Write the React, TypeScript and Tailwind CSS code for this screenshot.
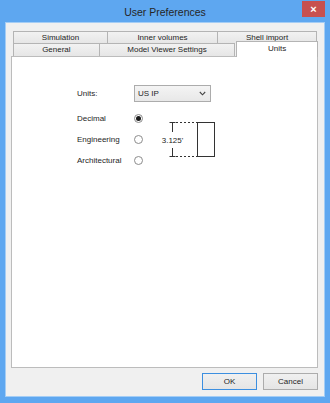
import React from "react";

function Tab({ label, className }: { label: string; className: string }) {
  return (
    <div
      className={`flex items-center justify-center border-l border-t border-r border-[#b4b4b4] bg-gradient-to-b from-[#f2f2f2] to-[#e6e6e6] text-[#1e1e1e] ${className}`}
    >
      {label}
    </div>
  );
}

function Radio({ checked }: { checked?: boolean }) {
  return (
    <div className="w-[9px] h-[9px] rounded-full border border-[#8c8c8c] bg-white flex items-center justify-center">
      {checked && <div className="w-[5px] h-[5px] rounded-full bg-[#1a1a1a]" />}
    </div>
  );
}

export default function App() {
  return (
    <div className="w-[330px] h-[403px] bg-[#5ea7f0] flex flex-col font-['Liberation_Sans',Arial,sans-serif] text-[8px] text-[#1e1e1e] leading-none">
      {/* Title bar */}
      <div className="relative h-[22px] flex items-center justify-center pt-[2px] text-[10.5px] text-[#262626]">
        User Preferences
        <div className="absolute right-[5px] top-[1px] w-[23px] h-[16px] bg-[#c75050] flex items-center justify-center text-white text-[11px] font-bold">
          ×
        </div>
      </div>

      {/* Client area */}
      <div className="mx-[5px] h-[375px] border border-[#a4cdf5] bg-[#f0f0f0] flex flex-col pt-[8px] pl-[5px] pr-[6px]">
        {/* Tab row 1 */}
        <div className="flex h-[12px] ml-[2px]">
          <Tab label="Simulation" className="w-[95px]" />
          <Tab label="Inner volumes" className="w-[111px] -ml-px" />
          <Tab label="Shell import" className="w-[100px] -ml-px" />
        </div>
        {/* Tab row 2 */}
        <div className="flex items-start h-[13px] ml-[2px]">
          <Tab label="General" className="w-[87px] h-[13px]" />
          <Tab label="Model Viewer Settings" className="w-[137px] h-[13px] -ml-px" />
          <div className="relative z-10 -mt-[2px] ml-px w-[82px] h-[16px] border-l border-t border-r border-[#b4b4b4] bg-white flex items-center justify-center pb-[1px]">
            Units
          </div>
        </div>
        {/* Panel */}
        <div className="w-[307px] h-[312px] border border-[#bcbcbc] bg-white pt-[28px] pl-[65px]">
          <div className="grid grid-cols-[57px_auto] items-center">
            <div className="text-[#1e1e1e]">Units:</div>
            <div className="w-[77px] h-[17px] border border-[#acacac] bg-gradient-to-b from-[#f4f4f4] to-[#e8e8e8] flex items-center justify-between pl-[3px] pr-[4px]">
              <span>US IP</span>
              <svg width="7" height="5" viewBox="0 0 7 5">
                <path d="M0.8 1 L3.5 3.8 L6.2 1" fill="none" stroke="#444" strokeWidth="1.1" />
              </svg>
            </div>
          </div>
          <div className="flex mt-[6px]">
            <div className="grid grid-cols-[57px_auto] auto-rows-[21px] items-center">
              <div>Decimal</div>
              <Radio checked />
              <div>Engineering</div>
              <Radio />
              <div>Architectural</div>
              <Radio />
            </div>
            <svg width="58" height="40" viewBox="0 0 58 40" className="ml-[17px] mt-[12px]">
              <g stroke="#333" strokeWidth="1" fill="none">
                <line x1="9.5" y1="2.5" x2="15.5" y2="2.5" />
                <line x1="12.5" y1="2.5" x2="12.5" y2="12" />
                <line x1="12.5" y1="28" x2="12.5" y2="36.5" />
                <line x1="9.5" y1="36.5" x2="15.5" y2="36.5" />
                <line x1="16" y1="2.5" x2="37" y2="2.5" strokeDasharray="2 2" />
                <line x1="16" y1="36.5" x2="37" y2="36.5" strokeDasharray="2 2" />
                <rect x="37.5" y="2.5" width="17" height="34" />
              </g>
              <text x="12.5" y="23" textAnchor="middle" fontSize="8" fill="#1e1e1e" fontFamily="Liberation Sans, Arial, sans-serif">
                3.125'
              </text>
            </svg>
          </div>
        </div>
        {/* Buttons */}
        <div className="flex justify-end gap-[6px] mt-[5px]">
          <div className="w-[55px] h-[17px] border border-[#3c8fe0] bg-gradient-to-b from-[#f0f0f0] to-[#e5e5e5] flex items-center justify-center">
            OK
          </div>
          <div className="w-[55px] h-[17px] border border-[#acacac] bg-gradient-to-b from-[#f0f0f0] to-[#e5e5e5] flex items-center justify-center">
            Cancel
          </div>
        </div>
      </div>
    </div>
  );
}
